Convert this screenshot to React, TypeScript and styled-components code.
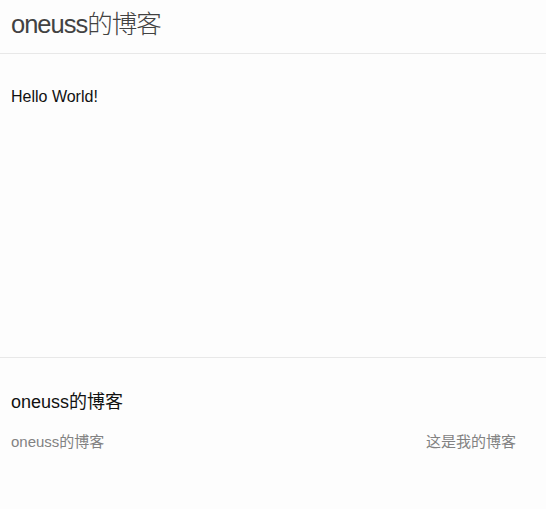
import React from "react";
import styled, { createGlobalStyle } from "styled-components";

const Global = createGlobalStyle`
  html, body { margin: 0; padding: 0; background: #fdfdfd; }
  body {
    font-family: "Liberation Sans", "Noto Sans CJK SC", sans-serif;
    font-size: 16px;
    line-height: 1.5;
    color: #111111;
    -webkit-font-smoothing: antialiased;
  }
`;

const Page = styled.div`
  min-height: 509px;
  display: flex;
  flex-direction: column;
  background: #fdfdfd;
`;

const Wrapper = styled.div`
  padding: 0 30px 0 11px;
`;

const Header = styled.header`
  border-bottom: 1px solid #e8e8e8;
  height: 53px;
`;

const SiteTitle = styled.a`
  display: block;
  font-size: 25.5px;
  font-weight: 300;
  line-height: 48px;
  letter-spacing: -1px;
  color: #424242;
  text-decoration: none;
`;

const Content = styled.main`
  padding: 31px 0 29px;
  height: 243px;
`;

const Paragraph = styled.p`
  margin: 0;
  font-size: 16px;
  line-height: 24px;
`;

const Footer = styled.footer`
  border-top: 1px solid #e8e8e8;
  padding: 31px 0 29px;
  flex: 1;
`;

const FooterHeading = styled.h2`
  margin: 0 0 15px;
  font-size: 18px;
  font-weight: 400;
  line-height: 27px;
  color: #111111;
`;

const FooterRow = styled.div`
  display: flex;
  justify-content: space-between;
  font-size: 15px;
  line-height: 22px;
  color: #828282;
`;

const FooterCol = styled.div``;

export default function App() {
  return (
    <Page>
      <Global />
      <Header>
        <Wrapper>
          <SiteTitle href="#">oneuss的博客</SiteTitle>
        </Wrapper>
      </Header>
      <Content>
        <Wrapper>
          <Paragraph>Hello World!</Paragraph>
        </Wrapper>
      </Content>
      <Footer>
        <Wrapper>
          <FooterHeading>oneuss的博客</FooterHeading>
          <FooterRow>
            <FooterCol>oneuss的博客</FooterCol>
            <FooterCol>这是我的博客</FooterCol>
          </FooterRow>
        </Wrapper>
      </Footer>
    </Page>
  );
}
